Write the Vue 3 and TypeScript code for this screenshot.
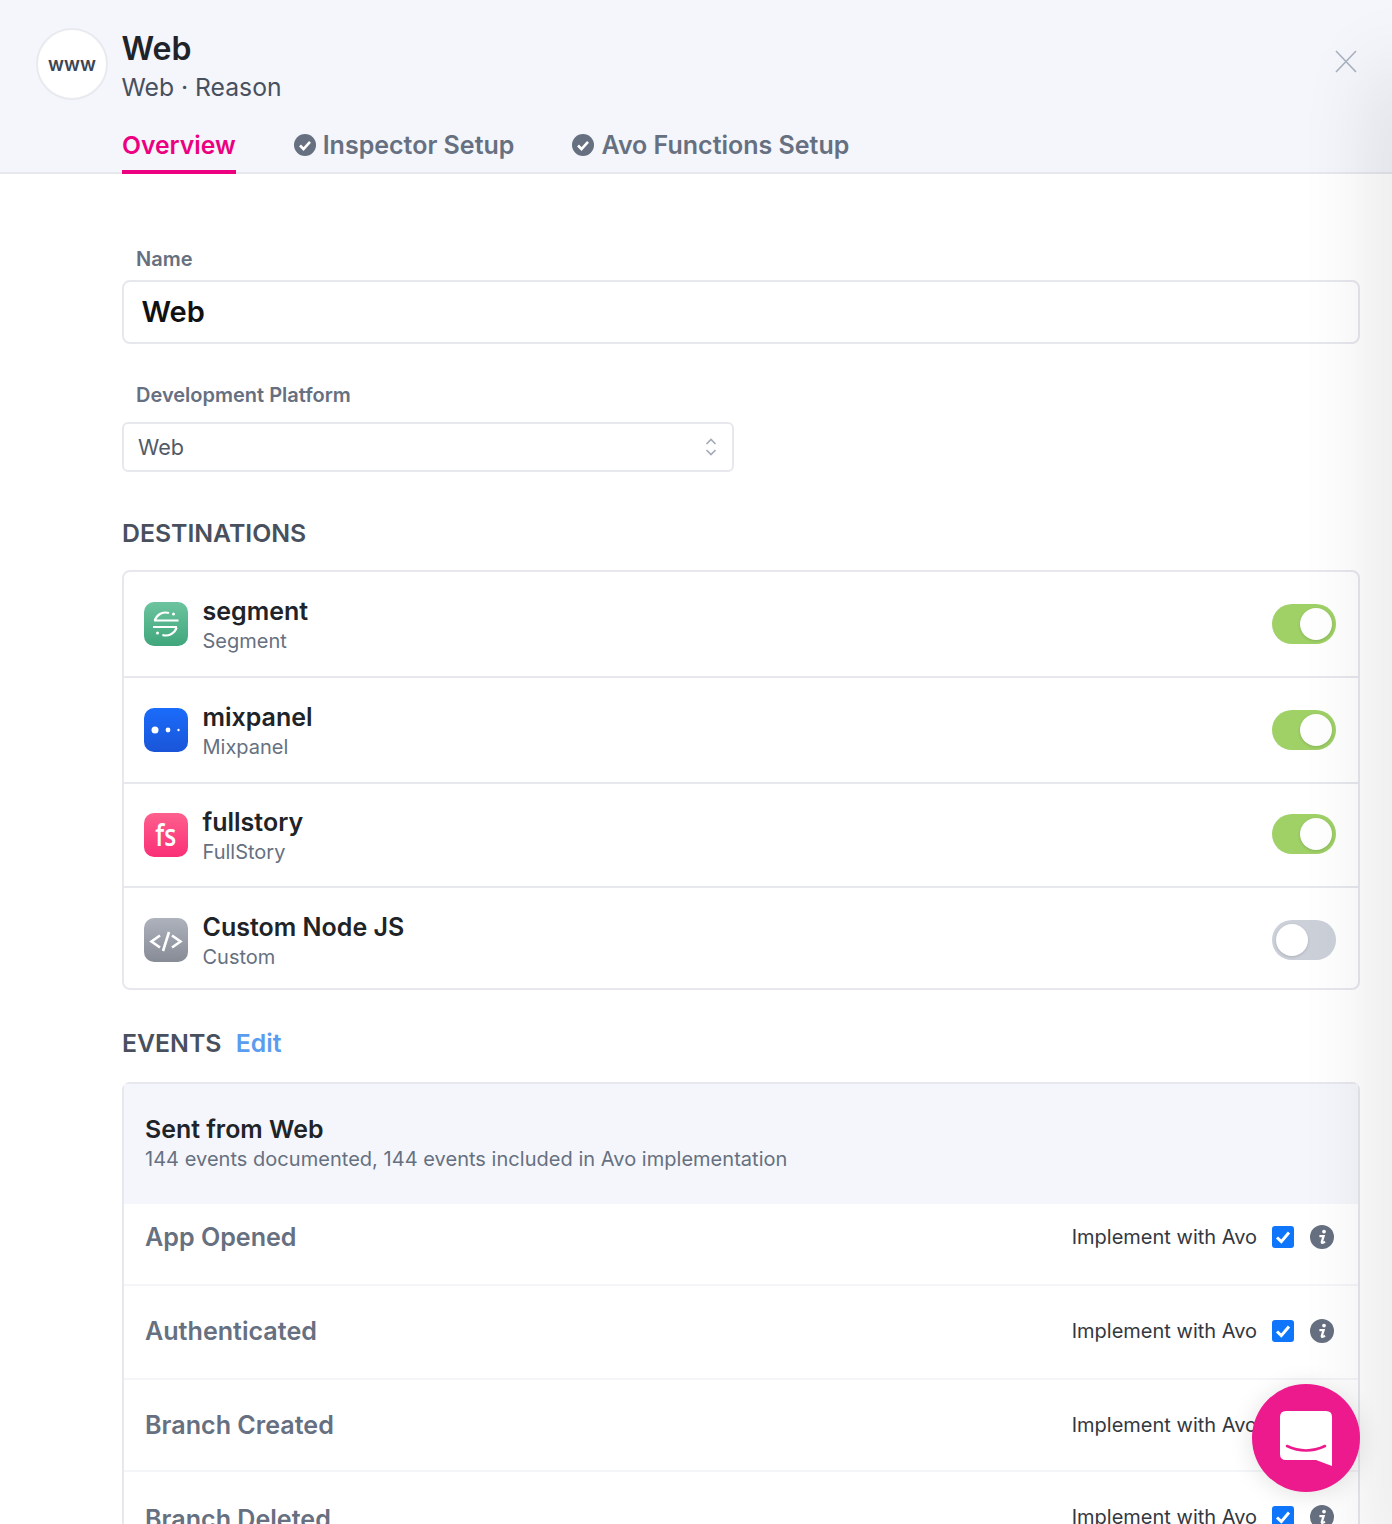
<template>
  <div class="page">
    <header class="header">
      <div class="head-top">
        <div class="avatar">www</div>
        <div class="head-text">
          <h1>Web</h1>
          <p>Web · Reason</p>
        </div>
        <svg class="close" width="24" height="24" viewBox="0 0 24 24" fill="none" stroke="#a9b1bf" stroke-width="1.6">
          <path d="M2 2 L22 23 M22 2 L2 23" />
        </svg>
      </div>
      <nav class="tabs">
        <span class="tab active">Overview</span>
        <span v-for="t in setupTabs" :key="t" class="tab">
          <svg width="22" height="22" viewBox="0 0 22 22">
            <circle cx="11" cy="11" r="11" fill="#667080" />
            <path d="M6 11.5 L9.5 15 L16 7.8" fill="none" stroke="#fff" stroke-width="2.6" />
          </svg>
          {{ t }}
        </span>
      </nav>
    </header>

    <main class="main">
      <label class="field-label">Name</label>
      <div class="name-input">Web</div>

      <label class="field-label platform-label">Development Platform</label>
      <div class="select">
        <span>Web</span>
        <svg width="12" height="20" viewBox="0 0 12 20" fill="none" stroke="#a4abb8" stroke-width="1.7">
          <path d="M1.5 7 L6 2.5 L10.5 7 M1.5 13 L6 17.5 L10.5 13" />
        </svg>
      </div>

      <h2 class="section-title dest-title">DESTINATIONS</h2>
      <div class="card">
        <div v-for="d in destinations" :key="d.name" class="dest-row" :class="d.rowClass">
          <div class="logo" :class="d.logo">
            <svg v-if="d.logo === 'segment'" width="44" height="44" viewBox="0 0 44 44" fill="none" stroke="#fff" stroke-width="2.2">
              <path d="M10 18.5 H34.5 M9 25 H33" />
              <path d="M10.8 18.3 A11.5 11.5 0 0 1 25 11 M32.6 25.7 A11.5 11.5 0 0 1 18.4 33" />
              <circle cx="29.5" cy="12" r="1.5" fill="#fff" stroke="none" />
              <circle cx="13.5" cy="31" r="1.5" fill="#fff" stroke="none" />
            </svg>
            <svg v-else-if="d.logo === 'mixpanel'" width="44" height="44" viewBox="0 0 44 44" fill="#fff">
              <circle cx="11" cy="22" r="3.5" />
              <circle cx="24" cy="22" r="2.4" />
              <circle cx="34.5" cy="22" r="1.2" />
            </svg>
            <span v-else-if="d.logo === 'fullstory'" class="fs">fs</span>
            <svg v-else width="44" height="44" viewBox="0 0 44 44" fill="none" stroke="#fff" stroke-width="2.6">
              <path d="M16 17.5 L7.5 23.5 L16 29.5 M28 17.5 L36.5 23.5 L28 29.5 M25 14 L19 33" />
            </svg>
          </div>
          <div class="dest-text">
            <div class="dest-name">{{ d.name }}</div>
            <div class="dest-sub">{{ d.sub }}</div>
          </div>
          <div class="toggle" :class="{ on: d.on }"><i></i></div>
        </div>
      </div>

      <h2 class="section-title events-title">EVENTS <a>Edit</a></h2>
      <div class="card events">
        <div class="events-head">
          <div class="events-head-title">Sent from Web</div>
          <div class="events-head-sub">144 events documented, 144 events included in Avo implementation</div>
        </div>
        <div v-for="e in events" :key="e.name" class="event-row" :class="e.rowClass">
          <span class="event-name">{{ e.name }}</span>
          <span class="implement">Implement with Avo</span>
          <svg class="check" width="22" height="22" viewBox="0 0 22 22">
            <rect width="22" height="22" rx="3" fill="#0f76fb" />
            <path d="M5 11.5 L9.3 15.6 L17 6.5" fill="none" stroke="#fff" stroke-width="3" />
          </svg>
          <svg class="info" width="24" height="24" viewBox="0 0 24 24">
            <circle cx="12" cy="12" r="12" fill="#667080" />
            <circle cx="14" cy="6.6" r="1.9" fill="#fff" />
            <path d="M9.4 11.2 H13.6 L11.8 17 Q11.6 18.8 15 16.8" fill="none" stroke="#fff" stroke-width="2.3" />
          </svg>
        </div>
      </div>
    </main>

    <div class="edge-shadow"></div>
    <div class="chat">
      <svg width="54" height="56" viewBox="0 0 54 56">
        <path d="M7 1 H47 Q53 1 53 7 V56 L37 50 H7 Q1 50 1 44 V7 Q1 1 7 1 Z" fill="#fff" />
        <path d="M8 36 Q27 45 46 36" fill="none" stroke="#ec1a8c" stroke-width="2.6" stroke-linecap="round" />
      </svg>
    </div>
  </div>
</template>

<script setup lang="ts">
const setupTabs = ['Inspector Setup', 'Avo Functions Setup']

const destinations = [
  { name: 'segment', sub: 'Segment', logo: 'segment', on: true, rowClass: 'r1' },
  { name: 'mixpanel', sub: 'Mixpanel', logo: 'mixpanel', on: true, rowClass: 'r2' },
  { name: 'fullstory', sub: 'FullStory', logo: 'fullstory', on: true, rowClass: 'r3' },
  { name: 'Custom Node JS', sub: 'Custom', logo: 'custom', on: false, rowClass: 'r4' }
]

const events = [
  { name: 'App Opened', rowClass: 'e1' },
  { name: 'Authenticated', rowClass: 'e2' },
  { name: 'Branch Created', rowClass: 'e3' },
  { name: 'Branch Deleted', rowClass: 'e4' }
]
</script>

<style>
html,
body {
  margin: 0;
  background: #fff;
}
</style>

<style scoped>
.page {
  position: relative;
  width: 1392px;
  height: 1524px;
  overflow: hidden;
  font-family: Inter, "Liberation Sans", sans-serif;
  color: #202327;
}

.header {
  height: 172px;
  background: #f4f6fb;
  border-bottom: 2px solid #e7e8ee;
  padding-left: 36px;
}

.head-top {
  display: flex;
  padding-top: 28px;
}

.avatar {
  width: 72px;
  height: 72px;
  box-sizing: border-box;
  border-radius: 50%;
  background: #fff;
  border: 2px solid #e9eaef;
  display: flex;
  align-items: center;
  justify-content: center;
  font-size: 19px;
  font-weight: 600;
  color: #3e4552;
}

.head-text {
  margin-left: 13.5px;
}

h1 {
  margin: 0;
  padding-top: 1px;
  font-size: 32px;
  line-height: 40px;
  font-weight: 600;
}

.head-text p {
  margin: 0;
  font-size: 24.7px;
  line-height: 37px;
  color: #48505e;
}

.close {
  position: absolute;
  top: 49px;
  left: 1334px;
}

.tabs {
  display: flex;
  align-items: flex-start;
  gap: 58px;
  margin-left: 86px;
  margin-top: 14px;
}

.tab {
  display: flex;
  align-items: center;
  gap: 7px;
  height: 50px;
  font-size: 25px;
  font-weight: 600;
  color: #667080;
}

.tab.active {
  font-size: 24.7px;
  color: #ec0080;
  border-bottom: 4px solid #ec0080;
}

.main {
  padding: 0 32px 0 122px;
}

.field-label {
  display: block;
  margin: 73px 0 0 14px;
  font-size: 20px;
  line-height: 24px;
  font-weight: 600;
  color: #667080;
}

.platform-label {
  margin-top: 39px;
}

.name-input {
  margin-top: 9px;
  height: 64px;
  box-sizing: border-box;
  border: 2px solid #e7e8ee;
  border-radius: 8px;
  padding: 0 0 2px 17.5px;
  display: flex;
  align-items: center;
  font-size: 29px;
  font-weight: 600;
  color: #111;
}

.select {
  margin-top: 15px;
  width: 612px;
  height: 50px;
  box-sizing: border-box;
  border: 2px solid #e7e8ee;
  border-radius: 6px;
  padding: 0 15px 1px 14px;
  display: flex;
  align-items: center;
  justify-content: space-between;
  font-size: 21.6px;
  color: #525a68;
}

.section-title {
  margin: 0;
  font-size: 24.8px;
  line-height: 32px;
  font-weight: 600;
  color: #48505e;
}

.dest-title {
  margin-top: 45px;
}

.events-title {
  margin-top: 37px;
}

.events-title a {
  margin-left: 8px;
  color: #5a9cf0;
}

.card {
  margin-top: 21px;
  border: 2px solid #e7e8ee;
  border-radius: 8px;
}

.dest-row {
  display: flex;
  align-items: center;
  padding: 0 22px 0 20px;
  border-bottom: 2px solid #e7e8ee;
  box-sizing: border-box;
}

.r1, .r2 { height: 106px; }
.r3 { height: 104px; }
.r3 .toggle { margin-bottom: 2px; }
.r4 { height: 100px; padding-top: 4px; border-bottom: 0; }

.logo {
  width: 44px;
  height: 44px;
  border-radius: 10px;
  display: flex;
  align-items: center;
  justify-content: center;
}

.logo.segment { background: linear-gradient(#6cc49e, #40a67c); }
.logo.mixpanel { background: linear-gradient(#1a6cfb, #1a55d8); }
.logo.fullstory { background: linear-gradient(#fd5f8d, #fb2f77); }
.logo.custom { background: linear-gradient(#adb2bd, #868b96); }

.fs {
  color: #fff;
  font-size: 30px;
  font-weight: 600;
  font-family: "Open Sans", sans-serif;
  transform: scaleX(0.82);
  line-height: 1;
}

.dest-text {
  margin-left: 14.5px;
  flex: 1;
}

.dest-name {
  font-size: 25px;
  line-height: 32px;
  font-weight: 600;
}

.dest-sub {
  padding-top: 1px;
  font-size: 20px;
  line-height: 26px;
  color: #667080;
}

.toggle {
  position: relative;
  width: 64px;
  height: 40px;
  border-radius: 20px;
  background: #cbd0d9;
}

.toggle.on {
  background: #9fd167;
}

.toggle i {
  position: absolute;
  top: 4px;
  left: 4px;
  width: 32px;
  height: 32px;
  border-radius: 50%;
  background: #fff;
  box-shadow: 0 1px 3px rgba(0, 0, 0, 0.15);
}

.toggle.on i {
  left: 28px;
}

.card.events {
  margin-top: 23px;
  height: 600px;
}

.events-head {
  height: 120px;
  box-sizing: border-box;
  background: #f4f6fb;
  padding: 29px 22px 0 21px;
}

.events-head-title {
  font-size: 24.9px;
  line-height: 32px;
  font-weight: 600;
}

.events-head-sub {
  font-size: 20px;
  line-height: 28px;
  letter-spacing: 0.03px;
  color: #667080;
}

.event-row {
  display: flex;
  align-items: center;
  padding: 0 24px 0 21px;
  border-bottom: 2px solid #f4f5f9;
  box-sizing: border-box;
}

.e1 { height: 82px; padding-bottom: 14px; }
.e2 { height: 94px; padding-bottom: 2px; }
.e3 { height: 92px; }
.e4 { height: 92px; }
.e4 .event-name { padding-top: 3px; }

.event-name {
  flex: 1;
  font-size: 25.1px;
  font-weight: 600;
  color: #667080;
}

.implement {
  font-size: 20px;
  color: #33383f;
}

.check {
  margin-left: 15px;
}

.info {
  margin-left: 16px;
}

.edge-shadow {
  position: absolute;
  top: 70px;
  left: 1392px;
  width: 20px;
  height: 1500px;
  box-shadow: 0 0 80px rgba(0, 0, 0, 0.3);
}

.chat {
  position: absolute;
  left: 1252px;
  top: 1384px;
  width: 108px;
  height: 108px;
  border-radius: 50%;
  background: #ec1a8c;
  box-shadow: 0 2px 24px rgba(0, 0, 0, 0.12);
  display: flex;
  align-items: center;
  justify-content: center;
}
</style>
